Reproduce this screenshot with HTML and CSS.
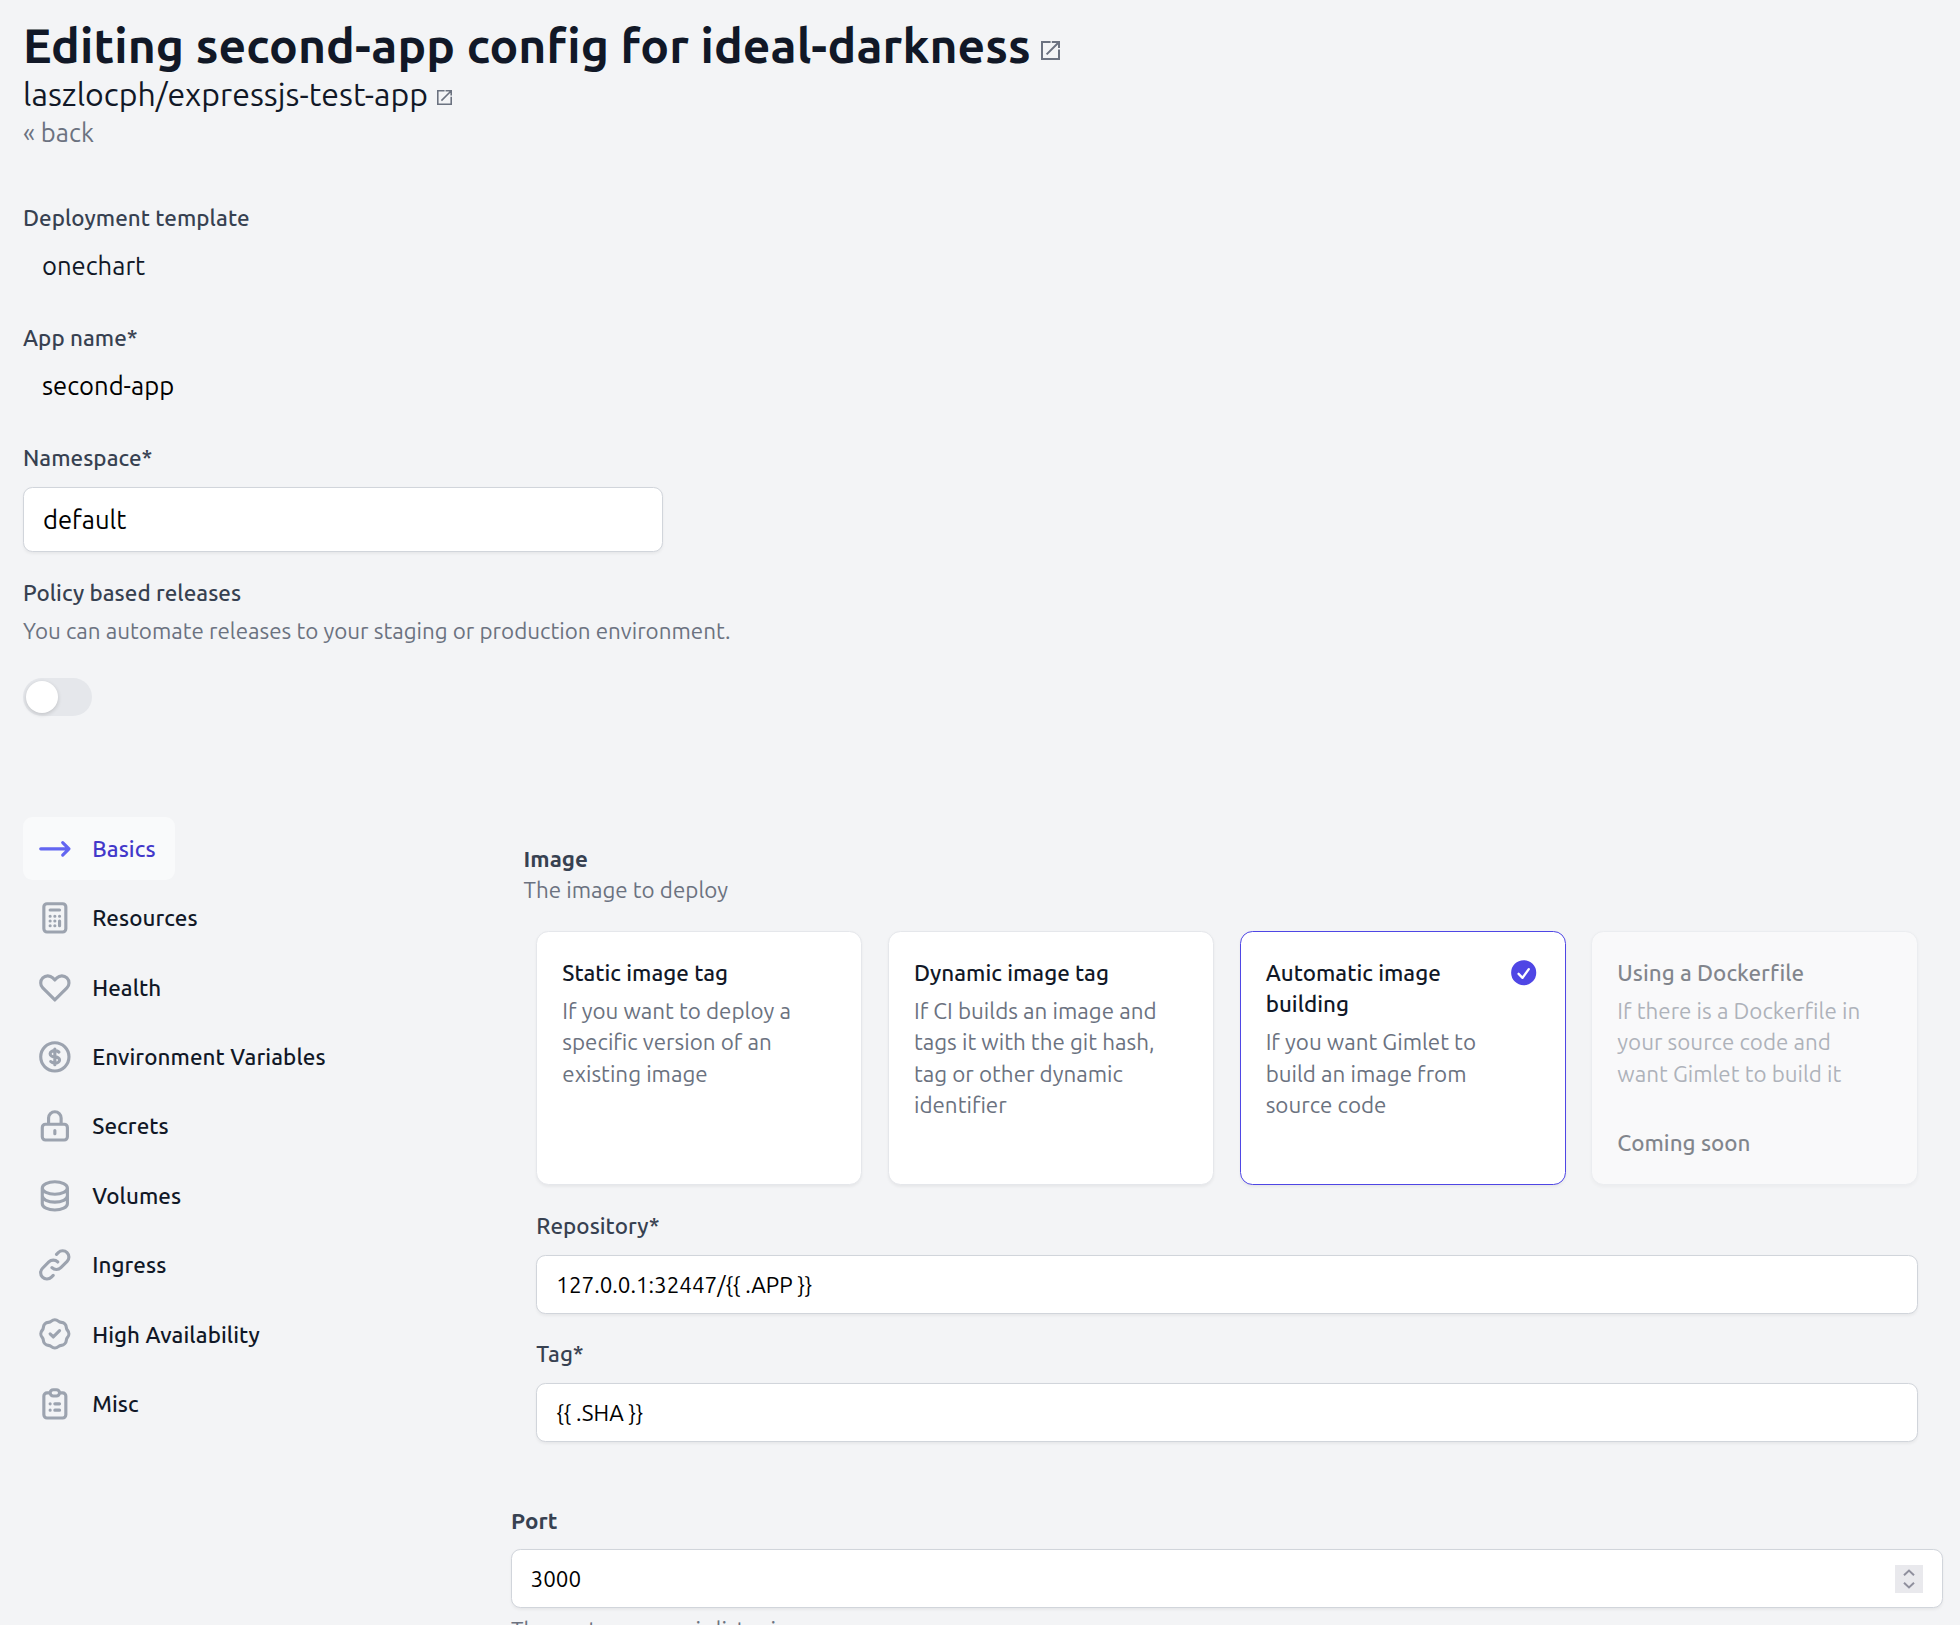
FILE: index.html
```
<!DOCTYPE html>
<html lang="en">
<head>
<meta charset="utf-8">
<title>Editing second-app config</title>
<link rel="stylesheet" href="styles.css">
</head>
<body>
<main class="page">
  <header class="header">
    <h1 class="title">Editing second-app config for ideal-darkness<svg class="ext ext-lg" viewBox="0 0 19 19"><path d="M9.6 1H1v17h17V8.4M10.8 1H18v6M17.8 1.2L5.6 13.4"/></svg></h1>
    <h2 class="subtitle">laszlocph/expressjs-test-app<svg class="ext ext-sm" viewBox="0 0 19 19"><path d="M9.6 1H1v17h17V8.4M10.8 1H18v6M17.8 1.2L5.6 13.4"/></svg></h2>
    <a class="back">« back</a>
  </header>

  <section class="settings">
    <div class="field"><div class="label">Deployment template</div><div class="value">onechart</div></div>
    <div class="field"><div class="label">App name*</div><div class="value value-strong">second-app</div></div>
    <div class="field-input"><label class="label" for="ns">Namespace*</label><input id="ns" class="input input-lg" type="text" value="default"></div>
    <div class="policy">
      <div class="label">Policy based releases</div>
      <p class="hint">You can automate releases to your staging or production environment.</p>
      <div class="toggle"><span class="knob"></span></div>
    </div>
  </section>

  <div class="editor">
    <nav class="nav">
      <a class="item active"><svg class="icon" viewBox="0 0 24 24"><path d="M17 8l4 4m0 0l-4 4m4-4H3"/></svg>Basics</a>
      <a class="item"><svg class="icon" viewBox="0 0 24 24"><path d="M9 7h6m0 10v-3m-3 3h.01M9 17h.01M9 14h.01M12 14h.01M15 11h.01M12 11h.01M9 11h.01M7 21h10a2 2 0 002-2V5a2 2 0 00-2-2H7a2 2 0 00-2 2v14a2 2 0 002 2z"/></svg>Resources</a>
      <a class="item"><svg class="icon" viewBox="0 0 24 24"><path d="M4.318 6.318a4.5 4.5 0 000 6.364L12 20.364l7.682-7.682a4.5 4.5 0 00-6.364-6.364L12 7.636l-1.318-1.318a4.5 4.5 0 00-6.364 0z"/></svg>Health</a>
      <a class="item"><svg class="icon" viewBox="0 0 24 24"><path d="M12 8c-1.657 0-3 .895-3 2s1.343 2 3 2 3 .895 3 2-1.343 2-3 2m0-8c1.11 0 2.08.402 2.599 1M12 8V7m0 1v8m0 0v1m0-1c-1.11 0-2.08-.402-2.599-1M21 12a9 9 0 11-18 0 9 9 0 0118 0z"/></svg>Environment Variables</a>
      <a class="item"><svg class="icon" viewBox="0 0 24 24"><path d="M12 15v2m-6 4h12a2 2 0 002-2v-6a2 2 0 00-2-2H6a2 2 0 00-2 2v6a2 2 0 002 2zm10-10V7a4 4 0 00-8 0v4h8z"/></svg>Secrets</a>
      <a class="item"><svg class="icon" viewBox="0 0 24 24"><path d="M4 7v10c0 2.21 3.582 4 8 4s8-1.79 8-4V7M4 7c0 2.21 3.582 4 8 4s8-1.79 8-4M4 7c0-2.21 3.582-4 8-4s8 1.79 8 4m0 5c0 2.21-3.582 4-8 4s-8-1.79-8-4"/></svg>Volumes</a>
      <a class="item"><svg class="icon" viewBox="0 0 24 24"><path d="M13.828 10.172a4 4 0 00-5.656 0l-4 4a4 4 0 105.656 5.656l1.102-1.101m-.758-4.899a4 4 0 005.656 0l4-4a4 4 0 00-5.656-5.656l-1.1 1.1"/></svg>Ingress</a>
      <a class="item"><svg class="icon" viewBox="0 0 24 24"><path d="M9 12l2 2 4-4M7.835 4.697a3.42 3.42 0 001.946-.806 3.42 3.42 0 014.438 0 3.42 3.42 0 001.946.806 3.42 3.42 0 013.138 3.138 3.42 3.42 0 00.806 1.946 3.42 3.42 0 010 4.438 3.42 3.42 0 00-.806 1.946 3.42 3.42 0 01-3.138 3.138 3.42 3.42 0 00-1.946.806 3.42 3.42 0 01-4.438 0 3.42 3.42 0 00-1.946-.806 3.42 3.42 0 01-3.138-3.138 3.42 3.42 0 00-.806-1.946 3.42 3.42 0 010-4.438 3.42 3.42 0 00.806-1.946 3.42 3.42 0 013.138-3.138z"/></svg>High Availability</a>
      <a class="item"><svg class="icon" viewBox="0 0 24 24"><path d="M9 5H7a2 2 0 00-2 2v12a2 2 0 002 2h10a2 2 0 002-2V7a2 2 0 00-2-2h-2M9 5a2 2 0 002 2h2a2 2 0 002-2M9 5a2 2 0 012-2h2a2 2 0 012 2m-3 7h3m-3 4h3m-6-4h.01M9 16h.01"/></svg>Misc</a>
    </nav>

    <section class="content">
      <div class="group-head">
        <div class="label bold">Image</div>
        <p class="hint">The image to deploy</p>
      </div>
      <div class="image-group">
        <div class="cards">
          <article class="card">
            <h3 class="card-title">Static image tag</h3>
            <p class="card-text">If you want to deploy a<br>specific version of an<br>existing image</p>
          </article>
          <article class="card">
            <h3 class="card-title">Dynamic image tag</h3>
            <p class="card-text">If CI builds an image and<br>tags it with the git hash,<br>tag or other dynamic<br>identifier</p>
          </article>
          <article class="card selected">
            <div class="card-row">
              <h3 class="card-title">Automatic image<br>building</h3>
              <svg class="check" viewBox="0 0 20 20"><path fill-rule="evenodd" clip-rule="evenodd" d="M10 18a8 8 0 100-16 8 8 0 000 16zm3.857-9.809a.75.75 0 00-1.214-.882l-3.483 4.79-1.88-1.88a.75.75 0 10-1.06 1.061l2.5 2.5a.75.75 0 001.137-.089l4-5.5z"/></svg>
            </div>
            <p class="card-text">If you want Gimlet to<br>build an image from<br>source code</p>
          </article>
          <article class="card disabled">
            <h3 class="card-title">Using a Dockerfile</h3>
            <p class="card-text">If there is a Dockerfile in<br>your source code and<br>want Gimlet to build it</p>
            <div class="card-title soon">Coming soon</div>
          </article>
        </div>
        <div class="row"><label class="label" for="repo">Repository*</label><input id="repo" class="input" type="text" value="127.0.0.1:32447/{{ .APP }}"></div>
        <div class="row"><label class="label" for="tag">Tag*</label><input id="tag" class="input" type="text" value="{{ .SHA }}"></div>
      </div>
      <div class="port">
        <label class="label bold" for="port">Port</label>
        <div class="input number">
          <input id="port" class="number-input" type="text" value="3000">
          <svg class="spinner" viewBox="0 0 28 28"><path d="M9 10.2l5-4.6 5 4.6M9 17.8l5 4.6 5-4.6"/></svg>
        </div>
        <p class="hint">The port your app is listening on</p>
      </div>
    </section>
  </div>
</main>
</body>
</html>
```
FILE: styles.css
```
* { box-sizing: border-box; }

body {
  margin: 0;
  height: 1625px;
  overflow: hidden;
  background: #f3f4f6;
  color: #111827;
  font-family: Ubuntu, "Noto Sans", sans-serif;
  font-size: 22.4px;
  line-height: 31.4px;
}

h1, h2, h3, p { margin: 0; font-weight: 400; }

.page { padding: 17px 17px 0 23px; }

/* Header */
.header { display: flex; flex-direction: column; }
.title {
  display: flex;
  align-items: center;
  font-size: 48px;
  line-height: 57px;
  font-weight: 700;
  letter-spacing: 0.1px;
}
.subtitle {
  display: flex;
  align-items: center;
  font-size: 32px;
  line-height: 40px;
  letter-spacing: 0.04px;
}
.back { font-size: 25.6px; line-height: 37px; color: #6b7280; }
.ext { fill: none; stroke: #6b7280; stroke-width: 2; }
.ext-lg { width: 19px; height: 19px; margin: 10px 0 0 10px; }
.ext-sm { width: 15px; height: 15px; margin: 7px 0 0 9px; }

/* Top settings */
.settings { margin-top: 51px; }
.field { height: 120px; }
.label {
  display: block;
  line-height: 32px;
  font-weight: 500;
  letter-spacing: 0.05px;
  color: #374151;
}
.bold { font-weight: 700; }
.value { margin-top: 13px; padding-left: 19px; font-size: 25.6px; line-height: 38px; }
.value-strong { color: #000; }
.input {
  display: block;
  width: 100%;
  height: 60px;
  padding: 0 19px;
  border: 1px solid #d1d5db;
  border-radius: 9.4px;
  background: #fff;
  color: #000;
  font: inherit;
  box-shadow: 0 1.5px 3px rgba(0, 0, 0, 0.05);
}
.input-lg { width: 640px; height: 65px; margin-top: 13px; font-size: 25.6px; }
.policy { margin-top: 25px; }
.hint { color: #6b7280; }
.policy .hint { margin-top: 6px; line-height: 32px; }
.toggle {
  width: 69px;
  height: 38px;
  margin-top: 31px;
  padding: 3px;
  border-radius: 19px;
  background: #e5e7eb;
}
.knob {
  display: block;
  width: 32px;
  height: 32px;
  border-radius: 50%;
  background: #fff;
  box-shadow: 0 1.5px 4px rgba(0, 0, 0, 0.16);
}

/* Editor */
.editor { display: grid; grid-template-columns: 488px 1fr; margin-top: 101px; }
.nav { display: flex; flex-direction: column; align-items: flex-start; gap: 6.4px; }
.item {
  display: flex;
  align-items: center;
  gap: 18.5px;
  height: 63px;
  padding: 0 19px 0 13px;
  border-radius: 9.4px;
  font-weight: 500;
  letter-spacing: 0.09px;
}
.active { background: #f9fafb; color: #4338ca; }
.icon {
  width: 37.7px;
  height: 37.7px;
  fill: none;
  stroke: #9ca3af;
  stroke-width: 2;
  stroke-linecap: round;
  stroke-linejoin: round;
}
.active .icon { stroke: #6366f1; }

.group-head { padding: 25.6px 0 0 12.5px; }
.group-head .label { line-height: 31.4px; }
.image-group { padding: 25.6px 25.5px 0 25.3px; }
.cards { display: grid; grid-template-columns: repeat(4, 1fr); gap: 25.5px; height: 254px; }
.card {
  padding: 25px;
  border: 1px solid #e5e7eb;
  border-radius: 12.5px;
  background: #fff;
  box-shadow: 0 1.5px 3px rgba(0, 0, 0, 0.05);
  white-space: nowrap;
}
.selected { border-color: #4f46e5; }
.disabled { opacity: 0.5; }
.card-title { font-size: 22.4px; font-weight: 500; letter-spacing: 0.03px; }
.card-row { display: flex; justify-content: space-between; }
.check { width: 31.4px; height: 31.4px; fill: #4f46e5; }
.card-text { margin-top: 6.6px; color: #6b7280; }
.soon { margin-top: 37.8px; }

.row { margin-top: 25.3px; }
.row .input { margin-top: 13px; height: 59px; }
.row + .row { margin-top: 24px; }
.port { margin-top: 63px; }
.number { display: flex; align-items: center; margin-top: 12px; height: 59px; padding-left: 18.5px; }
.number-input { flex: 1; padding: 0; border: 0; background: none; font: inherit; color: #000; }
.spinner { width: 28px; height: 28px; background: #e9e9ed; fill: none; stroke: #8f8f9d; stroke-width: 2; }
.port .hint { margin-top: 5.4px; }
```
